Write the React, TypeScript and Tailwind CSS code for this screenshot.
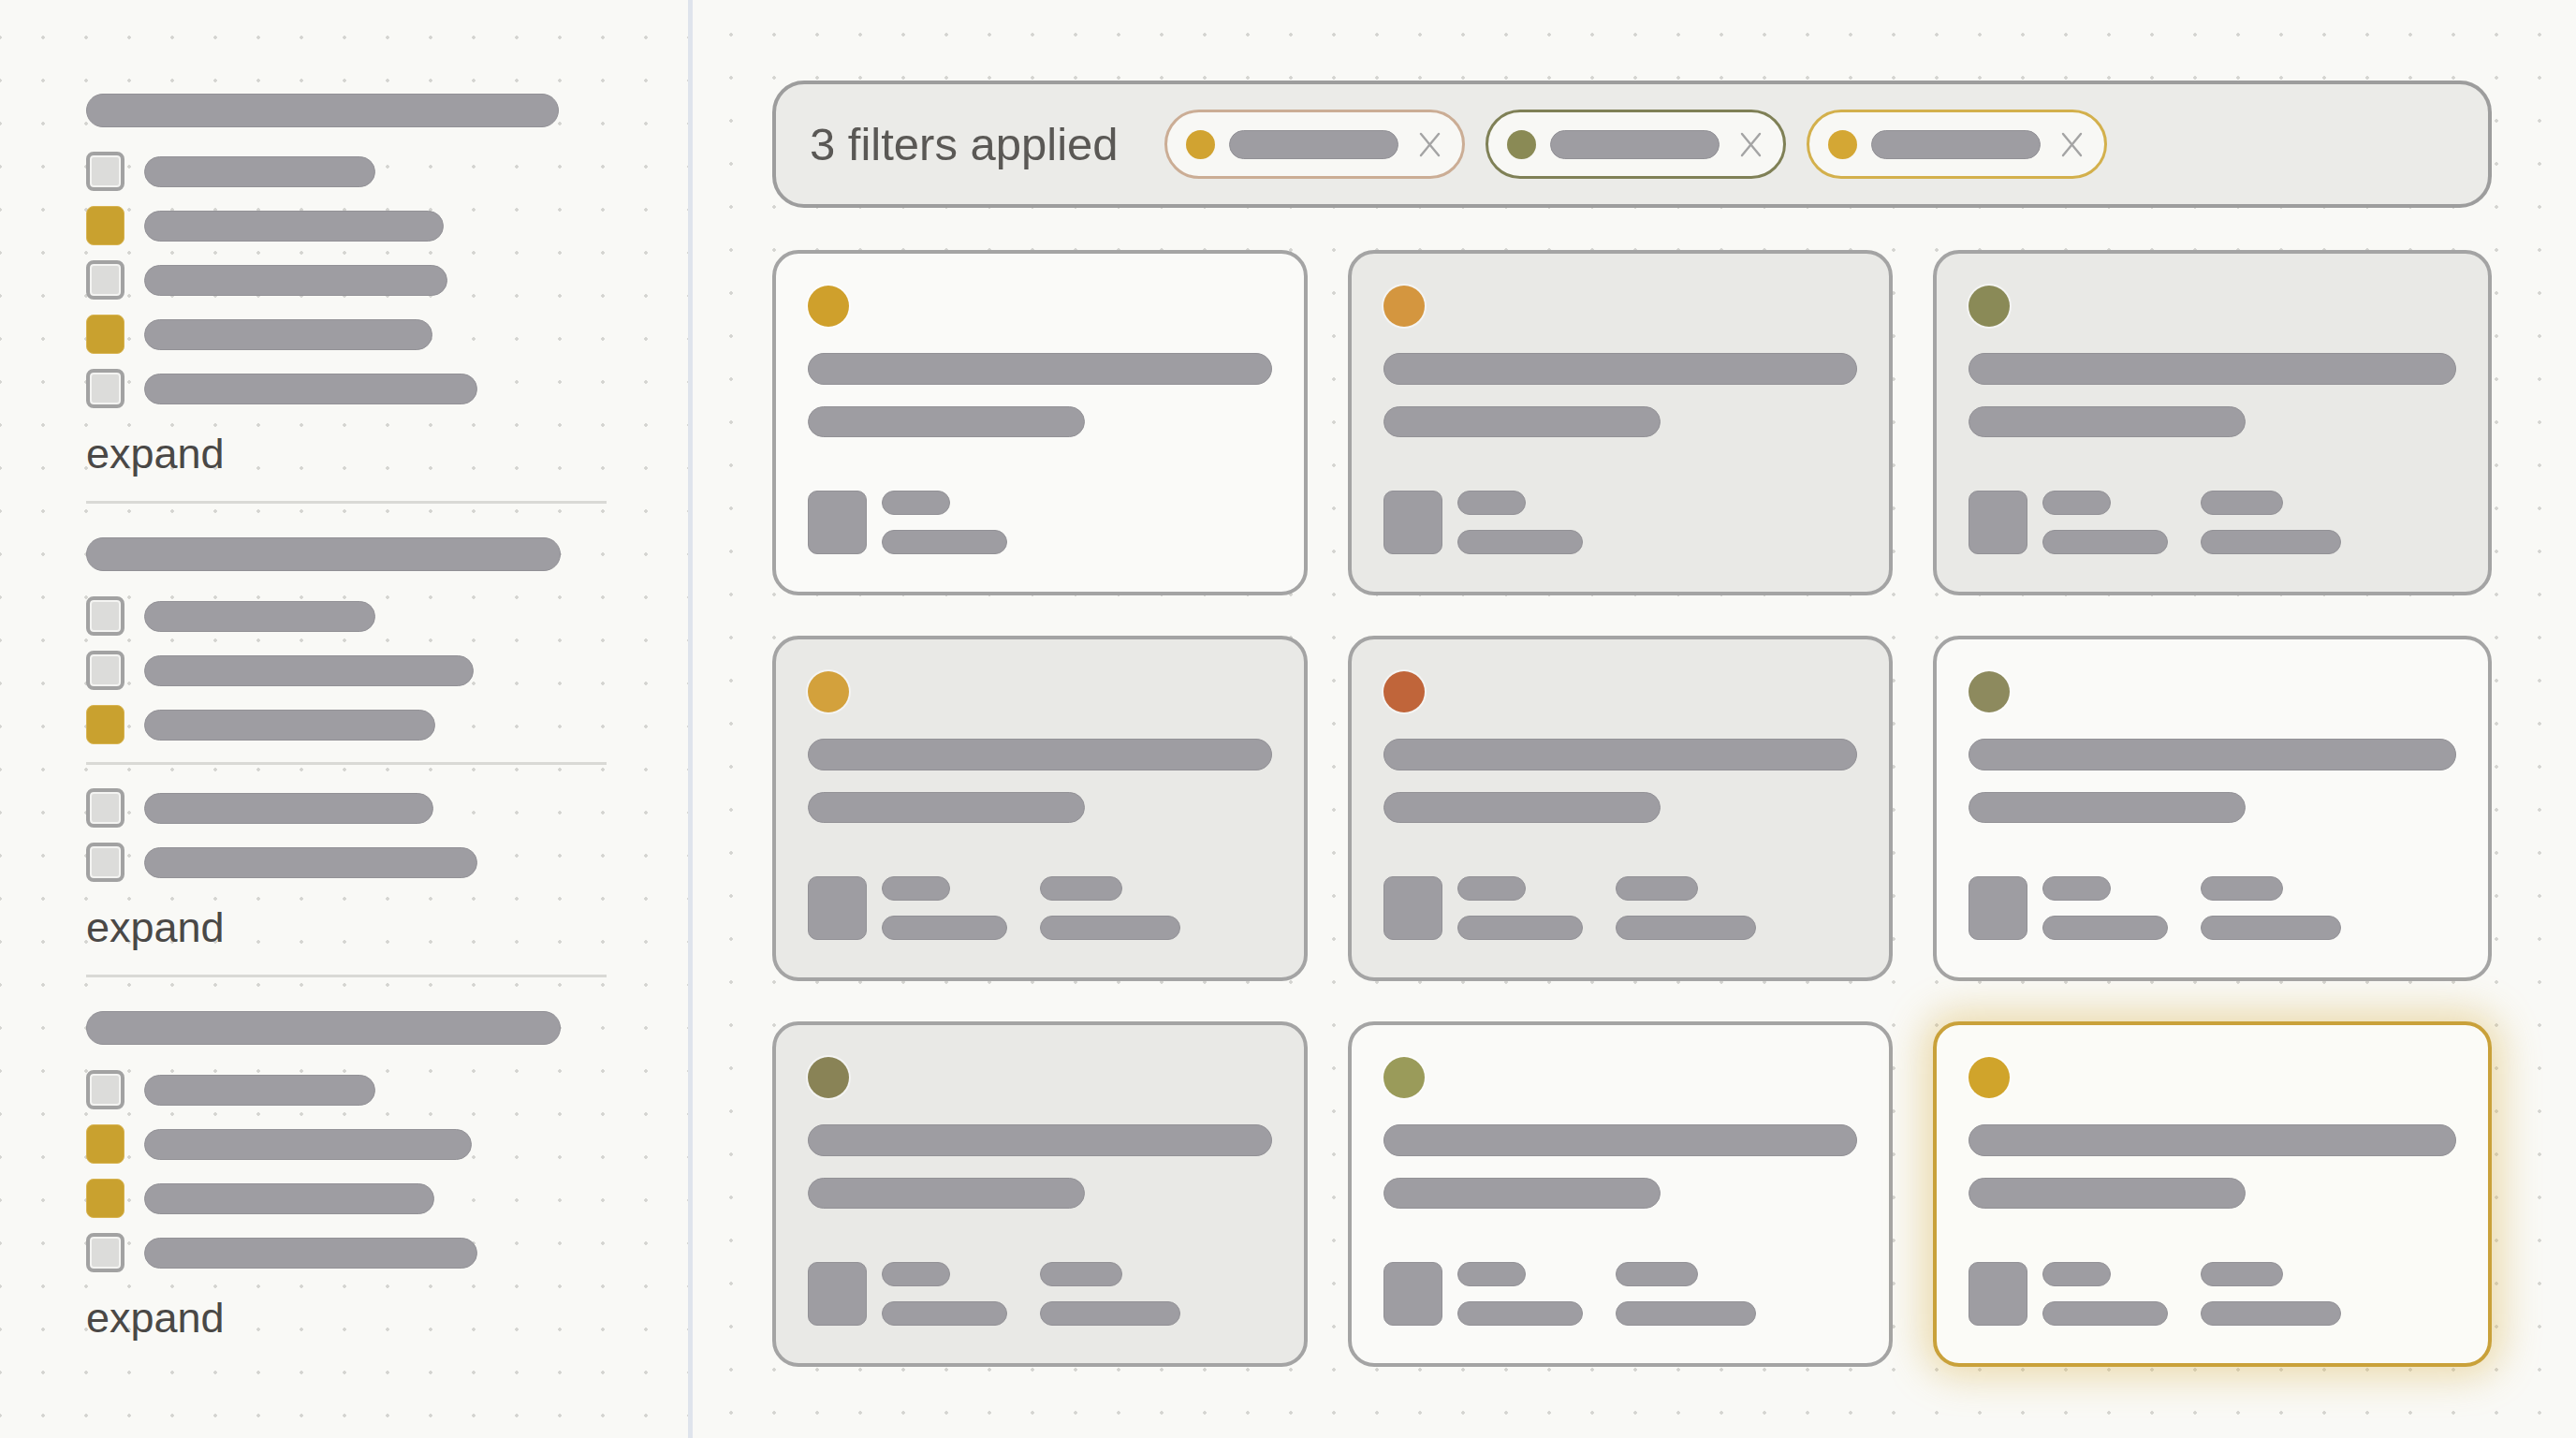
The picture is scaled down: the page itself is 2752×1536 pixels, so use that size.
import React from 'react';

type Row = { w: number; on?: boolean };

const dotsBg =
  'bg-[radial-gradient(circle,#d4d4d0_1.5px,transparent_2.1px)] bg-[size:46px_46px]';

const Bar = ({ w, h, className = '' }: { w?: number | string; h: number; className?: string }) => (
  <div
    className={`rounded-full bg-[#9e9da2] border border-[#929196] ${className}`}
    style={{ width: w, height: h }}
  />
);

const Checkbox = ({ on }: { on?: boolean }) =>
  on ? (
    <div className="w-[41px] h-[42px] shrink-0 rounded-[8px] bg-[#c9a12f] border border-[#d8b451]" />
  ) : (
    <div className="w-[41px] h-[42px] shrink-0 rounded-[8px] border-[4px] border-[#a2a2a2] bg-[#dcdcda] shadow-[inset_0_0_0_2px_#f4f4f2]" />
  );

const CheckRows = ({ rows }: { rows: Row[] }) => (
  <div className="flex flex-col gap-[16px]">
    {rows.map((r, i) => (
      <div key={i} className="flex items-center h-[42px]">
        <Checkbox on={r.on} />
        <Bar w={r.w} h={33} className="ml-[21px]" />
      </div>
    ))}
  </div>
);

const Expand = () => (
  <div className="mt-[26px] h-[45px] text-[45px] leading-none text-[#4a4846]">expand</div>
);

const Divider = ({ className = '' }: { className?: string }) => (
  <div className={`h-[3px] w-[556px] bg-[#d9d9d5] ${className}`} />
);

const Sidebar = () => (
  <aside
    className={`w-[740px] shrink-0 border-r-[5px] border-[#dfe4ec] bg-[#f9f9f6] pl-[92px] pt-[100px] ${dotsBg} bg-[position:23px_17px]`}
  >
    <Bar w={505} h={36} />
    <div className="mt-[26px]">
      <CheckRows
        rows={[{ w: 247 }, { w: 320, on: true }, { w: 324 }, { w: 308, on: true }, { w: 356 }]}
      />
    </div>
    <Expand />
    <Divider className="mt-[28px]" />

    <Bar w={507} h={36} className="mt-[36px]" />
    <div className="mt-[27px]">
      <CheckRows rows={[{ w: 247 }, { w: 352 }, { w: 311, on: true }]} />
    </div>
    <Divider className="mt-[19px]" />
    <div className="mt-[25px]">
      <CheckRows rows={[{ w: 309 }, { w: 356 }]} />
    </div>
    <Expand />
    <Divider className="mt-[28px]" />

    <Bar w={507} h={36} className="mt-[36px]" />
    <div className="mt-[27px]">
      <CheckRows rows={[{ w: 247 }, { w: 350, on: true }, { w: 310, on: true }, { w: 356 }]} />
    </div>
    <Expand />
  </aside>
);

const XMark = () => (
  <svg width="25" height="27" viewBox="0 0 25 27" className="shrink-0">
    <path d="M3 2 L22 25 M22 2 L3 25" stroke="#a4a4a4" strokeWidth="2.4" strokeLinecap="round" />
  </svg>
);

const Chip = ({ border, dot }: { border: string; dot: string }) => (
  <div
    className={`flex items-center h-[74px] w-[321px] rounded-full border-[3px] bg-[#f8f8f5] pl-[20px] pr-[22px] ${border}`}
  >
    <div className={`w-[31px] h-[31px] rounded-full shrink-0 ${dot}`} />
    <Bar w={181} h={31} className="ml-[15px]" />
    <div className="ml-[21px]">
      <XMark />
    </div>
  </div>
);

const FilterBar = () => (
  <div className="flex items-center h-[136px] rounded-[34px] border-[4px] border-[#9d9d9d] bg-[#ebebe8] pl-[36px]">
    <span className="text-[49px] leading-none text-[#5a5855] mr-[49px]">3 filters applied</span>
    <div className="flex gap-[22px]">
      <Chip border="border-[#cbad95]" dot="bg-[#d1a331]" />
      <Chip border="border-[#7f8056]" dot="bg-[#8a8a55]" />
      <Chip border="border-[#d3b04c]" dot="bg-[#d4a734]" />
    </div>
  </div>
);

type CardData = {
  dot: string;
  gray?: boolean;
  selected?: boolean;
  groups: number;
};

const cards: CardData[] = [
  { dot: 'bg-[#cfa02c]', groups: 1 },
  { dot: 'bg-[#d4963f]', gray: true, groups: 1 },
  { dot: 'bg-[#8a8a57]', gray: true, groups: 2 },
  { dot: 'bg-[#d3a13c]', gray: true, groups: 2 },
  { dot: 'bg-[#c0653a]', gray: true, groups: 2 },
  { dot: 'bg-[#8d8a5e]', groups: 2 },
  { dot: 'bg-[#898356]', gray: true, groups: 2 },
  { dot: 'bg-[#9a9b5a]', groups: 2 },
  { dot: 'bg-[#d0a42b]', selected: true, groups: 2 },
];

const Card = ({ c }: { c: CardData }) => {
  const frame = c.selected
    ? 'border-[4px] border-[#c9a13a] bg-[#fbfbf7] shadow-[0_0_40px_10px_rgba(214,172,60,0.4)]'
    : c.gray
      ? 'border-[4px] border-[#a4a4a4] bg-[#e9e9e6]'
      : 'border-[4px] border-[#a4a4a4] bg-[#fafaf8]';
  return (
    <div className={`flex flex-col h-[369px] rounded-[28px] px-[34px] pt-[34px] pb-[40px] ${frame}`}>
      <div className={`w-[44px] h-[44px] rounded-full ring-2 ring-white/50 ${c.dot}`} />
      <Bar w="100%" h={34} className="mt-[28px]" />
      <Bar w={296} h={33} className="mt-[23px]" />
      <div className="mt-auto flex items-center">
        <div className="w-[63px] h-[68px] rounded-[10px] bg-[#9e9da2] border border-[#929196]" />
        <div className="ml-[16px] flex flex-col justify-between h-[68px]">
          <Bar w={73} h={26} />
          <Bar w={134} h={26} />
        </div>
        {c.groups > 1 && (
          <div className="ml-[35px] flex flex-col justify-between h-[68px]">
            <Bar w={88} h={26} />
            <Bar w={150} h={26} />
          </div>
        )}
      </div>
    </div>
  );
};

export default function App() {
  return (
    <div
      className="flex w-[2752px] h-[1536px] overflow-hidden bg-[#f9f9f6]"
      style={{ fontFamily: '"Liberation Sans", Arial, sans-serif' }}
    >
      <Sidebar />
      <main className={`flex-1 pl-[85px] pr-[90px] pt-[86px] ${dotsBg} bg-[position:18px_14px]`}>
        <FilterBar />
        <div className="mt-[45px] grid grid-cols-[572px_582px_597px] gap-x-[43px] gap-y-[43px]">
          {cards.map((c, i) => (
            <Card key={i} c={c} />
          ))}
        </div>
      </main>
    </div>
  );
}
